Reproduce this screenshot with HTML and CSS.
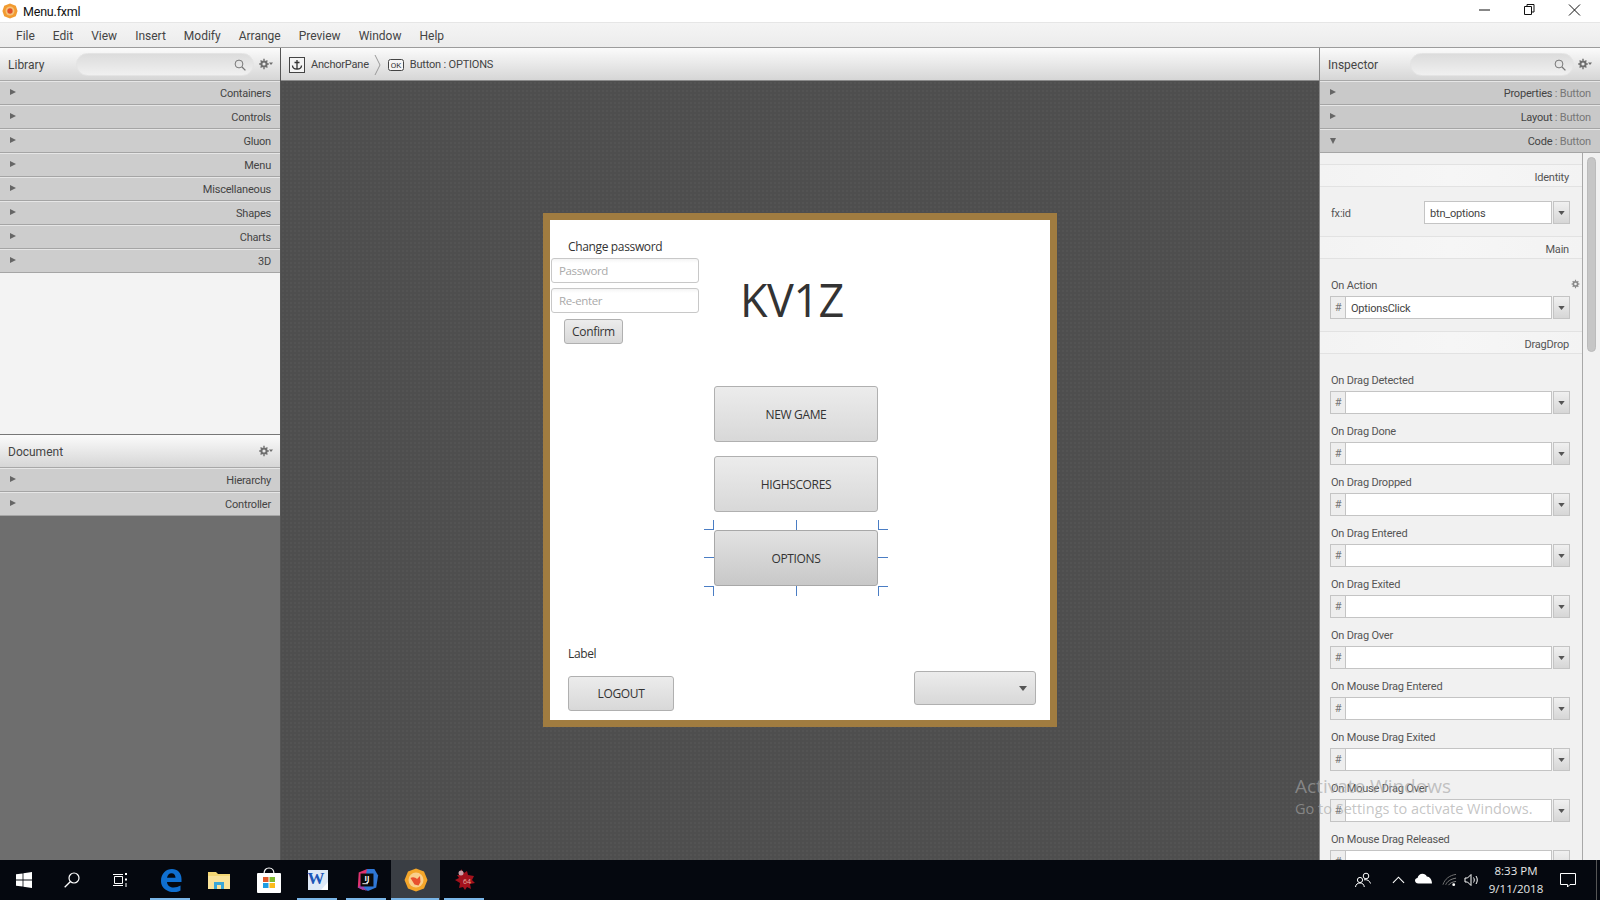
FILE: index.html
```html
<!DOCTYPE html>
<html lang="en">
<head>
<meta charset="utf-8">
<title>Menu.fxml</title>
<link rel="stylesheet" href="styles.css">
</head>
<body>
<svg class="defs" width="0" height="0" aria-hidden="true">
  <symbol id="gear" viewBox="0 0 14 12">
    <circle cx="5" cy="6" r="2.6" fill="none" stroke="#6e6e6e" stroke-width="2"/>
    <path d="M5 .8v2M5 9.2v2M.2 6h2M7.8 6h2M1.6 2.6l1.4 1.4M7 8l1.4 1.4M1.6 9.4 3 8M7 4l1.4-1.4" stroke="#6e6e6e" stroke-width="1.4"/>
    <path d="M10 4.4h4l-2 2.6z" fill="#6e6e6e"/>
  </symbol>
  <symbol id="gear-s" viewBox="0 0 10 12">
    <circle cx="5" cy="6" r="2.6" fill="none" stroke="#8a8a8a" stroke-width="2"/>
    <path d="M5 .8v2M5 9.2v2M.2 6h2M7.8 6h2M1.6 2.6l1.4 1.4M7 8l1.4 1.4M1.6 9.4 3 8M7 4l1.4-1.4" stroke="#8a8a8a" stroke-width="1.4"/>
  </symbol>
  <symbol id="search" viewBox="0 0 12 12">
    <circle cx="5" cy="5" r="3.9" fill="none" stroke="#777" stroke-width="1"/>
    <path d="M8 8l3.4 3.4" stroke="#777" stroke-width="1.3"/>
  </symbol>
  <symbol id="caret" viewBox="0 0 8 5"><path d="M0 0h8L4 5z" fill="#555"/></symbol>
</svg>
<div class="app">
  <header class="titlebar">
    <svg class="app-icon" viewBox="0 0 18 18"><path d="M9 .5 15.500 3 17.500 9 15.500 15 9 17.500 2.500 15 .5 9 2.500 3z" fill="#f29b30"/><circle cx="9" cy="9" r="5" fill="#f4c27a"/><circle cx="9" cy="9" r="3" fill="#e2522a"/></svg>
    <span class="title-text">Menu.fxml</span>
    <div class="win-controls">
      <svg viewBox="0 0 45 14" class="wc"><path d="M11 7h11" stroke="#111"/></svg>
      <svg viewBox="0 0 45 14" class="wc"><path d="M11.500 3.500h7v8h-7zM14 3.500v-2h7v7.500h-2.500" fill="none" stroke="#111"/></svg>
      <svg viewBox="0 0 45 14" class="wc"><path d="M11 1.500l11 11M22 1.500l-11 11" stroke="#111"/></svg>
    </div>
  </header>
  <nav class="menubar">
    <span>File</span><span>Edit</span><span>View</span><span>Insert</span><span>Modify</span><span>Arrange</span><span>Preview</span><span>Window</span><span>Help</span>
  </nav>
  <main class="workspace">
    <aside class="left">
      <section class="library">
        <div class="panel-head">
          <span class="panel-title">Library</span>
          <div class="pill lib-pill"><svg class="i-search"><use href="#search"/></svg></div>
          <svg class="i-gear"><use href="#gear"/></svg>
        </div>
        <div class="acc"><i class="arrow"></i><span>Containers</span></div>
        <div class="acc"><i class="arrow"></i><span>Controls</span></div>
        <div class="acc"><i class="arrow"></i><span>Gluon</span></div>
        <div class="acc"><i class="arrow"></i><span>Menu</span></div>
        <div class="acc"><i class="arrow"></i><span>Miscellaneous</span></div>
        <div class="acc"><i class="arrow"></i><span>Shapes</span></div>
        <div class="acc"><i class="arrow"></i><span>Charts</span></div>
        <div class="acc"><i class="arrow"></i><span>3D</span></div>
      </section>
      <section class="document">
        <div class="panel-head doc-head">
          <span class="panel-title">Document</span>
          <svg class="i-gear"><use href="#gear"/></svg>
        </div>
        <div class="acc"><i class="arrow"></i><span>Hierarchy</span></div>
        <div class="acc"><i class="arrow"></i><span>Controller</span></div>
      </section>
    </aside>
    <section class="center">
      <div class="crumbs">
        <svg class="crumb-anchor" viewBox="0 0 16 16"><rect x=".5" y=".5" width="15" height="15" fill="#f4f4f4" stroke="#444"/><path d="M8 3v9M5.500 5.500h5M3.500 8.500c0 2.500 2 3.500 4.500 3.500s4.500-1 4.500-3.500" fill="none" stroke="#333" stroke-width="1.300"/></svg>
        <span class="crumb-a">AnchorPane</span>
        <svg class="crumb-sep" viewBox="0 0 7 22"><path d="M1 1l5 10-5 10" fill="none" stroke="#999"/></svg>
        <svg class="crumb-ok" viewBox="0 0 16 12"><rect x=".5" y=".5" width="15" height="11" rx="2" fill="#f6f6f6" stroke="#444"/><text x="8" y="8.800" text-anchor="middle" class="ok-text">OK</text></svg>
        <span>Button : OPTIONS</span>
      </div>
      <div class="canvas">
        <div class="frame">
          <div class="surface">
            <span class="fx lbl change">Change password</span>
            <div class="fx tf pw">Password</div>
            <div class="fx tf re">Re-enter</div>
            <div class="fx btn confirm">Confirm</div>
            <span class="fx kv">KV1Z</span>
            <div class="fx btn big newgame">NEW GAME</div>
            <div class="fx btn big highs">HIGHSCORES</div>
            <div class="fx btn big options">OPTIONS</div>
            <svg class="fx handles" viewBox="0 0 184 76">
              <path d="M0 9.500h10M9.500 0v10M174 9.500h10M174.500 0v10M92.500 0v10M0 37.500h10M174 37.500h10M0 66.500h10M9.500 66v10M174 66.500h10M174.500 66v10M92.500 66v10" stroke="#4a7dc4" fill="none"/>
            </svg>
            <span class="fx lbl label2">Label</span>
            <div class="fx btn logout">LOGOUT</div>
            <div class="fx btn combo"><svg class="combo-caret"><use href="#caret"/></svg></div>
          </div>
        </div>
      </div>
    </section>
    <aside class="right">
      <div class="panel-head">
        <span class="panel-title">Inspector</span>
        <div class="pill insp-pill"><svg class="i-search"><use href="#search"/></svg></div>
        <svg class="i-gear"><use href="#gear"/></svg>
      </div>
      <div class="acc"><i class="arrow"></i><span>Properties <em>: Button</em></span></div>
      <div class="acc"><i class="arrow"></i><span>Layout <em>: Button</em></span></div>
      <div class="acc"><i class="arrow down"></i><span>Code <em>: Button</em></span></div>
      <div class="code">
        <div class="props">
          <div class="sec first">Identity</div>
          <div class="idrow">
            <span class="idlabel">fx:id</span>
            <div class="inp idinp">btn_options</div>
            <div class="dd"><svg><use href="#caret"/></svg></div>
          </div>
          <div class="sec">Main</div>
          <div class="prop action">
            <label>On Action</label>
            <svg class="gear-small"><use href="#gear-s"/></svg>
            <div class="fld"><b>#</b><div class="inp">OptionsClick</div><div class="dd"><svg><use href="#caret"/></svg></div></div>
          </div>
          <div class="sec">DragDrop</div>
          <div class="list">
            <div class="prop"><label>On Drag Detected</label><div class="fld"><b>#</b><div class="inp"></div><div class="dd"><svg><use href="#caret"/></svg></div></div></div>
            <div class="prop"><label>On Drag Done</label><div class="fld"><b>#</b><div class="inp"></div><div class="dd"><svg><use href="#caret"/></svg></div></div></div>
            <div class="prop"><label>On Drag Dropped</label><div class="fld"><b>#</b><div class="inp"></div><div class="dd"><svg><use href="#caret"/></svg></div></div></div>
            <div class="prop"><label>On Drag Entered</label><div class="fld"><b>#</b><div class="inp"></div><div class="dd"><svg><use href="#caret"/></svg></div></div></div>
            <div class="prop"><label>On Drag Exited</label><div class="fld"><b>#</b><div class="inp"></div><div class="dd"><svg><use href="#caret"/></svg></div></div></div>
            <div class="prop"><label>On Drag Over</label><div class="fld"><b>#</b><div class="inp"></div><div class="dd"><svg><use href="#caret"/></svg></div></div></div>
            <div class="prop"><label>On Mouse Drag Entered</label><div class="fld"><b>#</b><div class="inp"></div><div class="dd"><svg><use href="#caret"/></svg></div></div></div>
            <div class="prop"><label>On Mouse Drag Exited</label><div class="fld"><b>#</b><div class="inp"></div><div class="dd"><svg><use href="#caret"/></svg></div></div></div>
            <div class="prop"><label>On Mouse Drag Over</label><div class="fld"><b>#</b><div class="inp"></div><div class="dd"><svg><use href="#caret"/></svg></div></div></div>
            <div class="prop"><label>On Mouse Drag Released</label><div class="fld"><b>#</b><div class="inp"></div><div class="dd"><svg><use href="#caret"/></svg></div></div></div>
          </div>
        </div>
        <div class="sb"><div class="thumb"></div></div>
      </div>
    </aside>
  </main>
  <footer class="taskbar">
    <div class="tb"><svg viewBox="0 0 16 16" class="t16"><path d="M0 2.300 6.600 1.400V7.600H0zM7.400 1.300 16 0V7.600H7.400zM0 8.400H6.600V14.600L0 13.700zM7.400 8.400H16V16L7.400 14.700z" fill="#fff"/></svg></div>
    <div class="tb"><svg viewBox="0 0 16 16" class="t16"><circle cx="10" cy="6" r="5" fill="none" stroke="#fff" stroke-width="1.200"/><path d="M6.500 9.500 .7 15.300" stroke="#fff" stroke-width="1.300"/></svg></div>
    <div class="tb"><svg viewBox="0 0 16 16" class="t16"><path d="M2.500 4.500h8v7h-8zM1 2.500h10M1 13.500h10" fill="none" stroke="#fff"/><path d="M13 1h2v2h-2zM13 6.500h2v2h-2z" fill="#fff"/><path d="M14 11v4" stroke="#fff"/></svg></div>
    <div class="apps">
      <div class="app-t on"><svg viewBox="0 0 22 24" class="t22"><path d="M1 13C1 5.500 6 1 12 1c5.500 0 9.500 4 9.500 10v3H7c.3 4 3.500 5.500 6.500 5.500 2.700 0 5-.8 7-2v5c-2 1.200-4.700 1.800-7.500 1.800C6 23.300 1 19.500 1 13zM7 9.800h8.500c0-2.700-1.500-4.500-4-4.500-2.400 0-4 1.800-4.500 4.500z" fill="#0f6fd0"/></svg></div>
      <div class="app-t"><svg viewBox="0 0 23 20" class="t23"><path d="M0 2h8l2 2h12v15H0z" fill="#f4d774"/><path d="M0 6h22v13H0z" fill="#fae39a"/><path d="M6 19v-7h10v7h-3v-4H9v4z" fill="#3aa7d8"/></svg></div>
      <div class="app-t"><svg viewBox="0 0 24 26" class="t24"><path d="M7 7C7 3 9 1 12 1s5 2 5 6" fill="none" stroke="#fff" stroke-width="1.200"/><rect y="6" width="24" height="20" rx="1" fill="#fff"/><path d="M6 10h5.500v5H6z" fill="#e25a2b"/><path d="M12.500 10H18v5h-5.500z" fill="#7fba2e"/><path d="M6 16h5.500v5H6z" fill="#1e9ce4"/><path d="M12.500 16H18v5h-5.500z" fill="#fbbb1b"/></svg></div>
      <div class="app-t on"><svg viewBox="0 0 22 22" class="t22"><rect x="1" y="1" width="20" height="20" fill="#dfe9f7"/><path d="M14 21l7-8v8z" fill="#fff"/><text x="9" y="15" text-anchor="middle" class="word-w">W</text></svg></div>
      <div class="app-t on"><svg viewBox="0 0 26 26" class="t24"><path d="M4 5 13 1l2 4-6 19-6-3z" fill="#e0336f"/><path d="M13 1h8l4 7-2 13-9 4-5-3z" fill="#2f77d6"/><path d="M3 21l10 4-6-7z" fill="#9a43b0"/><rect x="6" y="6" width="14" height="14" fill="#0a0a0a"/><text x="13" y="14" text-anchor="middle" class="ij">IJ</text><path d="M8 17h6" stroke="#fff"/></svg></div>
      <div class="app-t active"><svg viewBox="0 0 24 24" class="t24"><path d="M12 .5 20 3.500 23.500 12 20 20.500 12 23.500 4 20.500.5 12 4 3.500z" fill="#f4a62a"/><circle cx="12" cy="12" r="7.500" fill="#f9cf8c"/><path d="M6.500 10c2.500-1.500 5-.5 6.500 1l3-3 .5 6-2 3.500-4-1z" fill="#e8502e"/></svg></div>
      <div class="app-t on"><svg viewBox="0 0 24 24" class="t24"><path d="M8 1l3 4 3-2 1 4 6 1-2 4 3 3-5 1 1 5-4-2-2 3-2-3-4 1 1-5-5-3 4-2-2-3 4 0z" fill="#a3111c"/><circle cx="8" cy="5" r="2.500" fill="#c9a0a8"/><text x="14" y="15.500" text-anchor="middle" class="red-num">64</text></svg></div>
    </div>
    <div class="tray">
      <svg viewBox="0 0 16 16" class="tr people"><circle cx="5" cy="8" r="2.600" fill="none" stroke="#fff"/><path d="M.5 15c.3-2.600 2-4 4.500-4s4 1.400 4.300 4" fill="none" stroke="#fff"/><circle cx="11" cy="4" r="2.800" fill="none" stroke="#fff"/><path d="M9 7.800c2.800-.6 5.800.8 6.500 3.700" fill="none" stroke="#fff"/></svg>
      <svg viewBox="0 0 14 8" class="tr chev"><path d="M1 7l6-6 6 6" fill="none" stroke="#fff" stroke-width="1.200"/></svg>
      <svg viewBox="0 0 17 11" class="tr cloud"><path d="M3.500 10.500C1 10.500 0 9 0 7.600 0 6 1.300 5 2.500 5 3 2.500 5 .8 7.500.8c2 0 3.500 1 4.300 2.700 2.700-.1 5.200 3 5.200 7z" fill="#fff"/></svg>
      <svg viewBox="0 0 16 14" class="tr wifi"><path d="M1 12C3 6 8 2 15 1" fill="none" stroke="#777"/><path d="M4 12c1.500-3.500 5-6 11-7M7 12.500c1-2 4-3.500 8-4" fill="none" stroke="#888"/><circle cx="12.500" cy="12" r="1.500" fill="#fff"/></svg>
      <svg viewBox="0 0 16 14" class="tr vol"><path d="M1 5h2.500L7 1.500v11L3.500 9H1z" fill="none" stroke="#fff"/><path d="M9.500 4.500c1 1.500 1 3.500 0 5M12 3c1.700 2.500 1.700 5.500 0 8" fill="none" stroke="#fff"/></svg>
      <div class="clock"><span>8:33 PM</span><span>9/11/2018</span></div>
      <svg viewBox="0 0 16 16" class="tr note"><path d="M.5 1.500h15v11H10L7.500 15 7.500 12.500h-7z" fill="none" stroke="#fff"/></svg>
      <div class="desk"></div>
    </div>
  </footer>
  <div class="watermark"><div class="wm1">Activate Windows</div><div class="wm2">Go to Settings to activate Windows.</div></div>
</div>
</body>
</html>
```
FILE: styles.css
```css
* { box-sizing: border-box; }
html, body { margin: 0; padding: 0; }
body { width: 1600px; height: 900px; overflow: hidden; font-family: "Open Sans", "Liberation Sans", sans-serif; font-size: 12px; color: #333; letter-spacing: -0.35px; }
.defs { position: absolute; }
.app { position: relative; width: 1600px; height: 900px; display: flex; flex-direction: column; }

.titlebar { height: 23px; background: #fff; display: flex; align-items: center; padding-left: 2px; border-bottom: 1px solid #e6e6e6; flex: none; }
.app-icon { width: 16px; height: 16px; margin-right: 5px; }
.title-text { font-family: Roboto, sans-serif; font-size: 12.500px; color: #111; letter-spacing: -0.2px; }
.win-controls { margin-left: auto; display: flex; margin-right: -3px; }
.wc { width: 45px; height: 14px; display: block; margin-top: -3px; }

.menubar { height: 25px; flex: none; background: linear-gradient(#f4f4f4, #ececec); border-bottom: 1px solid #9c9c9c; display: flex; align-items: center; padding: 2px 0 0 16px; gap: 18px; font-family: Roboto, sans-serif; font-size: 12px; letter-spacing: 0; color: #444; }

.workspace { flex: 1; display: flex; min-height: 0; }
.left { width: 281px; flex: none; display: flex; flex-direction: column; background: #6e6e6e; border-right: 1px solid #555; font-family: Roboto, sans-serif; font-size: 11px; letter-spacing: -0.2px; }
.library { height: 386px; flex: none; background: #f3f3f3; }
.document { flex: 1; border-top: 1px solid #777; }
.panel-head { height: 33px; display: flex; align-items: center; padding-left: 8px; background: linear-gradient(#fbfbfb, #d6d6d6); border-bottom: 1px solid #a8a8a8; position: relative; }
.panel-title { font-family: Roboto, sans-serif; font-size: 12px; color: #444; letter-spacing: 0; padding-top: 1px; }
.pill { position: absolute; top: 5px; height: 23px; border-radius: 12px; background: linear-gradient(#dcdcdc, #f0f0f0); border: 1px solid #e4e4e4; display: flex; align-items: center; justify-content: flex-end; padding-right: 7px; }
.lib-pill { left: 76px; width: 178px; }
.insp-pill { left: 90px; width: 164px; }
.i-search { width: 12px; height: 12px; }
.i-gear { width: 14px; height: 12px; position: absolute; left: 259px; top: 10px; }
.right .i-gear { left: 258px; }
.acc { height: 24px; display: flex; align-items: center; justify-content: flex-end; padding: 0 9px 0 0; background: #cdcdcd; border-top: 1px solid #e6e6e6; border-bottom: 1px solid #a5a5a5; position: relative; color: #444; }
.acc em { font-style: normal; color: #777; }
.arrow { position: absolute; left: 10px; top: 7px; width: 0; height: 0; border-left: 6px solid #666; border-top: 3.500px solid transparent; border-bottom: 3.500px solid transparent; }
.arrow.down { border-top: 6px solid #666; border-left: 3.500px solid transparent; border-right: 3.500px solid transparent; border-bottom: 0; top: 8px; }

.center { flex: 1; min-width: 0; display: flex; flex-direction: column; }
.crumbs { height: 33px; flex: none; background: linear-gradient(#fbfbfb, #d6d6d6); border-bottom: 1px solid #8a8a8a; display: flex; align-items: center; padding: 1px 0 0 8px; color: #444; font-family: Roboto, sans-serif; font-size: 11px; letter-spacing: -0.2px; }
.crumb-anchor { width: 16px; height: 16px; margin-right: 6px; }
.crumb-sep { width: 7px; height: 24px; margin: 0 7px 0 5px; }
.crumb-ok { width: 16px; height: 12px; margin-right: 6px; }
.ok-text { font-size: 8px; fill: #333; letter-spacing: 0; }
.canvas { flex: 1; display: flex; align-items: center; justify-content: center; padding-bottom: 1px; background-color: #4e4e4e; background-image: radial-gradient(#535353 1px, transparent 1px); background-size: 4px 4px; }
.frame { width: 514px; height: 514px; border: 7px solid #a07c40; flex: none; }
.surface { width: 500px; height: 500px; background: #fff; position: relative; }
.fx { position: absolute; }
.lbl { font-size: 12px; color: #333; line-height: 16px; }
.change { left: 18px; top: 19px; }
.label2 { left: 18px; top: 426px; }
.tf { left: 1px; width: 148px; height: 25px; border: 1px solid #c8c8c8; border-radius: 3px; background: linear-gradient(#f4f4f4, #fff 4px); color: #aaa; padding-left: 7px; line-height: 23px; font-size: 11.500px; }
.pw { top: 38px; }
.re { top: 68px; }
.btn { border: 1px solid #b0b0b0; border-radius: 3px; background: linear-gradient(#ececec, #d8d8d8); display: flex; align-items: center; justify-content: center; color: #333; font-size: 12px; }
.confirm { left: 14px; top: 99px; width: 59px; height: 25px; }
.kv { left: 190px; top: 48px; font-size: 45px; line-height: 64px; color: #333; letter-spacing: -0.5px; }
.big { left: 164px; width: 164px; height: 56px; font-size: 12px; }
.newgame { top: 166px; }
.highs { top: 236px; }
.options { top: 310px; background: linear-gradient(#e2e2e2, #c8c8c8); border-color: #a8a8a8; }
.handles { left: 154px; top: 300px; width: 184px; height: 76px; }
.logout { left: 18px; top: 456px; width: 106px; height: 35px; }
.combo { left: 364px; top: 451px; width: 122px; height: 34px; justify-content: flex-end; padding-right: 8px; }
.combo-caret { width: 8px; height: 5px; }

.right { width: 281px; flex: none; display: flex; flex-direction: column; background: #f1f1f1; min-height: 0; border-left: 1px solid #8a8a8a; font-family: Roboto, sans-serif; font-size: 11px; letter-spacing: -0.2px; }
.right .acc { background: #c9c9c9; }
.code { flex: 1; display: flex; min-height: 0; overflow: hidden; }
.props { width: 263px; flex: none; border-right: 1px solid #a8a8a8; height: 707px; overflow: hidden; }
.sec { height: 23px; padding: 3px 13px 0 0; text-align: right; line-height: 20px; color: #555; border-top: 1px solid #e2e2e2; border-bottom: 1px solid #e2e2e2; background: linear-gradient(90deg, #f3f3f3, #f6f6f6 50%, #f3f3f3); }
.sec.first { margin-top: 11px; }
.idrow { display: flex; height: 49px; padding: 14px 0 12px 11px; align-items: flex-start; }
.idlabel { width: 93px; line-height: 25px; color: #555; }
.inp { flex: 1; height: 23px; background: #fff; border: 1px solid #c4c4c4; line-height: 23px; padding-left: 5px; color: #444; }
.idinp { flex: none; width: 128px; }
.dd { width: 17px; height: 23px; margin-left: 1px; flex: none; border: 1px solid #c4c4c4; background: linear-gradient(#f0f0f0, #d6d6d6); display: flex; align-items: center; justify-content: center; }
.dd svg { width: 7px; height: 4px; }
.prop { height: 51px; padding: 0 12px 0 10px; position: relative; }
.prop label { display: block; height: 16px; line-height: 18px; margin-bottom: 3px; padding-left: 1px; color: #555; }
.action { height: 72px; padding-top: 18px; }
.list { padding-top: 18px; }
.gear-small { position: absolute; left: 251px; top: 20px; width: 9px; height: 10px; }
.fld { display: flex; height: 23px; }
.fld b { width: 15px; height: 23px; flex: none; border: 1px solid #c4c4c4; border-right: 0; background: #eee; font-weight: 400; text-align: center; line-height: 21px; color: #777; }
.sb { flex: 1; padding: 4px 3px 0 4px; }
.thumb { width: 9px; height: 195px; border-radius: 5px; background: #c6c6c6; border: 1px solid #bbb; }

.taskbar { height: 40px; flex: none; background: #05080f; display: flex; align-items: center; color: #fff; letter-spacing: 0; }
.tb { width: 48px; height: 40px; display: flex; align-items: center; justify-content: center; flex: none; }
.t16 { width: 16px; height: 16px; }
.t22 { width: 22px; height: 24px; }
.t23 { width: 23px; height: 20px; }
.t24 { width: 24px; height: 26px; }
.apps { display: flex; margin-left: 2px; }
.app-t { width: 49px; height: 40px; display: flex; align-items: center; justify-content: center; position: relative; }
.app-t.on::after, .app-t.active::after { content: ""; position: absolute; bottom: 0; left: 4px; right: 5px; height: 2px; background: #7ab6e8; }
.app-t.active { background: #3a3e44; }
.app-t.active::after { left: 0; right: 1px; }
.word-w { font-size: 17px; font-weight: 700; fill: #1d56b8; font-family: "Liberation Serif", serif; letter-spacing: 0; }
.ij { font-size: 8px; font-weight: 700; fill: #fff; letter-spacing: 0; }
.red-num { font-size: 7px; fill: #e8b0a0; letter-spacing: 0; }
.tray { margin-left: auto; height: 40px; display: flex; align-items: center; position: relative; }
.tr { display: block; flex: none; }
.people { width: 16px; height: 16px; margin-right: 21px; }
.chev { width: 13px; height: 8px; margin-right: 10px; }
.cloud { width: 17px; height: 11px; margin-right: 10px; margin-top: -3px; }
.wifi { width: 15px; height: 14px; margin-right: 7px; }
.vol { width: 16px; height: 14px; margin-right: 7px; }
.clock { width: 58px; display: flex; flex-direction: column; align-items: center; font-size: 11.500px; line-height: 18px; color: #e8e8e8; }
.note { width: 16px; height: 16px; margin: 0 24px 0 15px; }
.desk { position: absolute; right: 3px; top: 0; width: 1px; height: 40px; background: #555; }

.watermark { position: absolute; left: 1295px; top: 774px; color: rgba(165,165,165,.65); pointer-events: none; letter-spacing: 0; }
.wm1 { font-size: 19px; line-height: 25px; }
.wm2 { font-size: 14.500px; line-height: 20px; }
```
